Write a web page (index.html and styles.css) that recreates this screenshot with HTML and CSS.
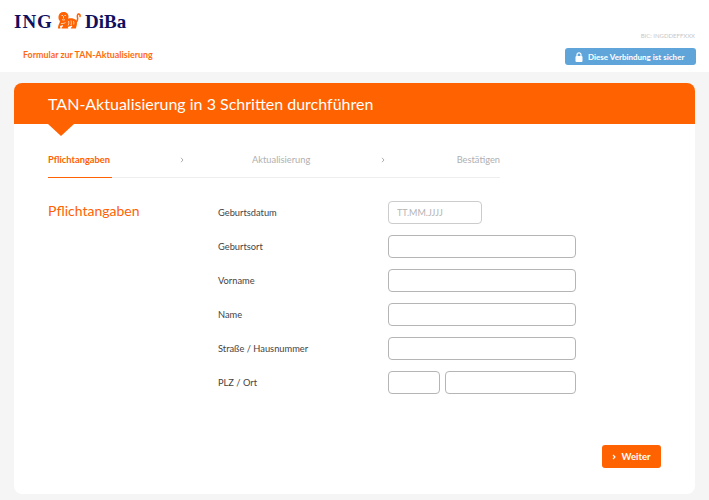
FILE: index.html
```html
<!DOCTYPE html>
<html lang="de">
<head>
  <meta charset="UTF-8">
  <title>Formular zur TAN-Aktualisierung</title>
  <link rel="stylesheet" href="styles.css">
</head>
<body>
  <header class="top">
    <div class="top-left">
      <div class="logo">
        <span class="ing">ING</span>
        <svg class="lion" width="23" height="17" viewBox="0 0 23 17">
          <path fill="none" stroke="#ff6200" stroke-width="1.500" stroke-linecap="round" d="M16.500 11c2.500-1 3.500-3 3-5.500C19 3 20 1.500 21 2c1 .5 1.300 1.500 1 2.500"/>
          <path fill="#ff6200" d="M5.500 0C8.500 0 10.500 2 10.500 4.500c0 .8-.2 1.500-.5 2 3-.7 6-.3 8 1.500 1 1 1.200 3 .8 5l-1 3.500h-5c0-1 .7-1.500 1.500-1.500l-.5-1.500-4 1.500.5 1.500H3.500c0-1 .5-1.500 1-1.500l.5-2-3 1 .5 2.500H0c0-2 .5-4 1.500-5.500L2 9C.8 8 .3 6.500.5 4.500.7 2 2.800 0 5.500 0z"/>
          <path fill="none" stroke="#fff" stroke-width=".7" d="M3.500 3.500h1.500M6.500 3.500H8M5.500 4v2.500M4 7.500c1 .7 2 .7 3 0M10.500 9c.5 1.500.5 3-.5 4.500M13 8.500c.5 1.500.5 3 0 4.500M15.500 9c.5 1 .5 2.500.2 3.500M3 11.500c1.500 0 3 0 4.500-1"/>
        </svg>
        <span class="diba">DiBa</span>
      </div>
      <div class="form-name">Formular zur TAN-Aktualisierung</div>
    </div>
    <div class="top-right">
      <div class="bic">BIC: INGDDEFFXXX</div>
      <div class="secure">
        <svg width="8" height="10" viewBox="0 0 8 10">
          <path fill="none" stroke="#fff" stroke-width="1.200" d="M2 4.500V2.800a2 2 0 0 1 4 0v1.700"/>
          <rect fill="#fff" x=".5" y="4" width="7" height="6" rx="1"/>
        </svg>
        Diese Verbindung ist sicher
      </div>
    </div>
  </header>

  <main class="page">
    <section class="card">
      <div class="banner">
        <h1>TAN-Aktualisierung in 3 Schritten durchführen</h1>
      </div>

      <div class="steps">
        <div class="step active">Pflichtangaben</div>
        <svg class="sep" width="4" height="6" viewBox="0 0 4 6"><path d="M1 .8 3 3 1 5.200"/></svg>
        <div class="step">Aktualisierung</div>
        <svg class="sep second" width="4" height="6" viewBox="0 0 4 6"><path d="M1 .8 3 3 1 5.200"/></svg>
        <div class="step last">Bestätigen</div>
      </div>

      <div class="content">
        <h2>Pflichtangaben</h2>
        <form class="fields">
          <label class="row"><span>Geburtsdatum</span><input class="short" placeholder="TT.MM.JJJJ"></label>
          <label class="row"><span>Geburtsort</span><input></label>
          <label class="row"><span>Vorname</span><input></label>
          <label class="row"><span>Name</span><input></label>
          <label class="row"><span>Straße / Hausnummer</span><input></label>
          <label class="row"><span>PLZ / Ort</span><input class="zip"><input class="city"></label>
        </form>
      </div>

      <div class="actions">
        <button class="next" type="button">
          <svg width="4" height="6" viewBox="0 0 4 6"><path d="M1 .8 3 3 1 5.200"/></svg>
          Weiter
        </button>
      </div>
    </section>
  </main>
</body>
</html>
```

FILE: styles.css
```css
* { box-sizing: border-box; }

body {
  margin: 0;
  height: 500px;
  overflow: hidden;
  background: #f5f5f5;
  font-family: "Lato", sans-serif;
  color: #333;
}

.top {
  height: 72px;
  background: #fff;
  display: flex;
  justify-content: space-between;
  padding: 11px 13px 0 14px;
}

.logo {
  display: flex;
  align-items: center;
  height: 22px;
  font-family: "Liberation Serif", serif;
  font-weight: bold;
  font-size: 19px;
  color: #10105f;
}

.ing { letter-spacing: 1px; width: 44px; }
.lion { margin-bottom: 3px; }
.diba { margin-left: 4px; }

.form-name {
  margin: 16px 0 0 9px;
  font-size: 8.900px;
  font-weight: 700;
  color: #ff6a10;
}

.top-right {
  display: flex;
  flex-direction: column;
  align-items: flex-end;
  padding-top: 21px;
}

.bic {
  font-size: 6px;
  color: #c8c8c8;
  margin-right: 1px;
}

.secure {
  margin-top: 9px;
  width: 131px;
  height: 17px;
  border-radius: 3px;
  background: #5fa5da;
  color: #fff;
  font-size: 8px;
  font-weight: 700;
  display: flex;
  align-items: center;
  gap: 5px;
  padding-left: 10px;
}

.page { padding: 11px 14px 0; }

.card {
  background: #fff;
  border-radius: 8px;
  height: 411px;
}

.banner {
  position: relative;
  height: 41px;
  background: #ff6200;
  border-radius: 8px 8px 0 0;
  padding-left: 34px;
}

.banner::after {
  content: "";
  position: absolute;
  left: 34px;
  top: 41px;
  border-left: 13px solid transparent;
  border-right: 13px solid transparent;
  border-top: 12px solid #ff6200;
}

h1 {
  margin: 0;
  font-size: 16px;
  font-weight: 400;
  line-height: 41px;
  color: #fff;
}

.steps {
  display: flex;
  gap: 68px;
  width: 452px;
  margin: 23px 0 0 34px;
  height: 31px;
  border-bottom: 1px solid #eee;
  font-size: 9.300px;
  color: #b0b0b0;
  line-height: 26px;
}

.step { height: 31px; }
.step.last { margin-left: auto; }

.step.active {
  width: 64px;
  color: #ff6200;
  font-weight: 700;
  border-bottom: 1px solid #ff6200;
}

.sep path, .next path { fill: none; }

.sep {
  margin-top: 10px;
  stroke: #999;
  stroke-width: 0.8;
}

.sep.second { margin-left: 3px; }

.content {
  display: flex;
  margin: 22px 0 0 34px;
}

h2 {
  margin: 0;
  width: 170px;
  font-size: 14px;
  font-weight: 400;
  line-height: 22px;
  color: #ff6200;
}

.fields {
  display: flex;
  flex-direction: column;
  gap: 11px;
  margin-top: 1px;
}

.row {
  display: flex;
  align-items: center;
  gap: 5px;
  font-size: 9.300px;
  color: #444;
}

.row span { width: 165px; }

input {
  width: 188px;
  height: 23px;
  background: #fff;
  border: 1px solid #b5b5b5;
  border-radius: 4px;
  font-family: inherit;
  font-size: 9px;
  padding: 0 8px;
}

input::placeholder { color: #b4b4b4; }

input.short { width: 94px; border-color: #ccc; }
input.zip { width: 52px; }
input.city { width: 131px; }

.actions {
  display: flex;
  justify-content: flex-end;
  margin: 51px 34px 0 0;
}

.next {
  width: 59px;
  height: 23px;
  border: none;
  border-radius: 3px;
  background: #ff6200;
  color: #fff;
  font-family: inherit;
  font-size: 9.500px;
  font-weight: 700;
}

.next svg {
  margin-right: 3px;
  stroke: #fff;
  stroke-width: 1.200;
}
```
